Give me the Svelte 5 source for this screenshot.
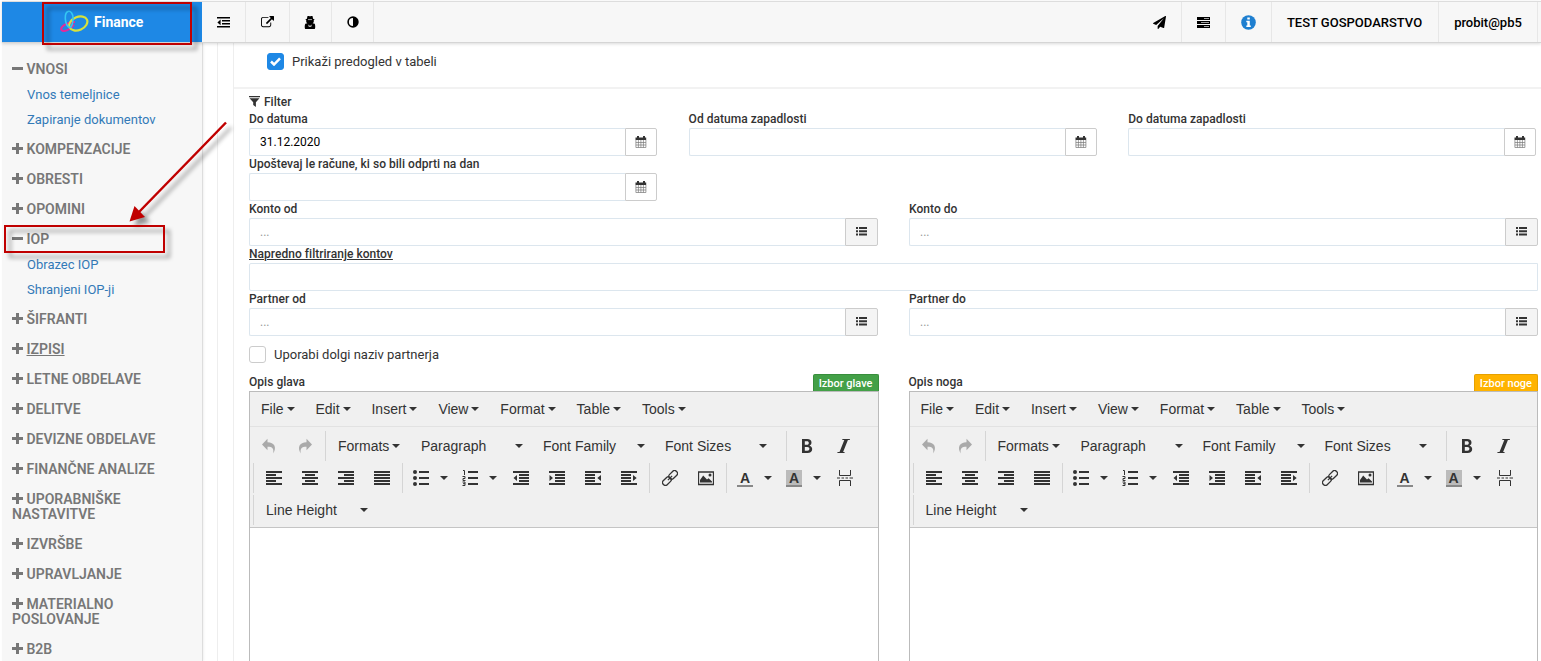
<!--
	Finance module, IOP form
	Sidebar menu, top bar, filter fields and two rich text editors
-->
<script lang="ts">
	interface MenuItem {
		title: string;
		links?: string[];
		hovered?: boolean;
	}

	interface Editor {
		label: string;
		action: string;
		kind: string;
	}

	const menu: MenuItem[] = [
		{ title: 'VNOSI', links: ['Vnos temeljnice', 'Zapiranje dokumentov'] },
		{ title: 'KOMPENZACIJE' },
		{ title: 'OBRESTI' },
		{ title: 'OPOMINI' },
		{ title: 'IOP', links: ['Obrazec IOP', 'Shranjeni IOP-ji'] },
		{ title: 'ŠIFRANTI' },
		{ title: 'IZPISI', hovered: true },
		{ title: 'LETNE OBDELAVE' },
		{ title: 'DELITVE' },
		{ title: 'DEVIZNE OBDELAVE' },
		{ title: 'FINANČNE ANALIZE' },
		{ title: 'UPORABNIŠKE NASTAVITVE' },
		{ title: 'IZVRŠBE' },
		{ title: 'UPRAVLJANJE' },
		{ title: 'MATERIALNO POSLOVANJE' },
		{ title: 'B2B' }
	];

	const editors: Editor[] = [
		{ label: 'Opis glava', action: 'Izbor glave', kind: 'green' },
		{ label: 'Opis noga', action: 'Izbor noge', kind: 'orange' }
	];

	const editorMenu = ['File', 'Edit', 'Insert', 'View', 'Format', 'Table', 'Tools'];

	let dateTo = $state('31.12.2020');
	let preview = $state(true);
	let longName = $state(false);
</script>

{#snippet caret()}
	<svg class="caret" width="8" height="4" viewBox="0 0 8 4"><path d="M0 0h8L4 4z" /></svg>
{/snippet}

{#snippet icon(name: string)}
	<svg class="icon" width="16" height="16" viewBox="0 0 16 16">
		{#if name === 'left'}
			<path d="M0 1h16v2H0zM0 4h10v2H0zM0 7h16v2H0zM0 10h10v2H0zM0 13h16v2H0z" />
		{:else if name === 'center'}
			<path d="M0 1h16v2H0zM3 4h10v2H3zM0 7h16v2H0zM3 10h10v2H3zM0 13h16v2H0z" />
		{:else if name === 'right'}
			<path d="M0 1h16v2H0zM6 4h10v2H6zM0 7h16v2H0zM6 10h10v2H6zM0 13h16v2H0z" />
		{:else if name === 'justify'}
			<path d="M0 1h16v2H0zM0 4h16v2H0zM0 7h16v2H0zM0 10h16v2H0zM0 13h16v2H0z" />
		{:else if name === 'bullets'}
			<circle cx="2" cy="2" r="2" /><circle cx="2" cy="8" r="2" /><circle cx="2" cy="14" r="2" />
			<path d="M6 1h10v2H6zM6 7h10v2H6zM6 13h10v2H6z" />
		{:else if name === 'numbers'}
			<path d="M6 1h10v2H6zM6 7h10v2H6zM6 13h10v2H6z" />
			<path class="thin" d="M1 .5h1.500V5M.5 6.500h2.500v2h-2v2h2.500M.5 12h2.500v3.500H.5M1 13.700h2" />
		{:else if name === 'outdent'}
			<path d="M0 1h16v2H0zM6 4h10v2H6zM6 7h10v2H6zM6 10h10v2H6zM0 13h16v2H0zM4 5v6L.5 8z" />
		{:else if name === 'indent'}
			<path d="M0 1h16v2H0zM6 4h10v2H6zM6 7h10v2H6zM6 10h10v2H6zM0 13h16v2H0zM.5 5v6L4 8z" />
		{:else if name === 'ltr'}
			<path d="M0 1h16v2H0zM0 4h10v2H0zM0 7h10v2H0zM0 10h10v2H0zM0 13h16v2H0zM16 5v6l-3.700-3z" />
		{:else if name === 'rtl'}
			<path d="M0 1h16v2H0zM0 4h10v2H0zM0 7h10v2H0zM0 10h10v2H0zM0 13h16v2H0zM12 5v6l3.700-3z" />
		{:else if name === 'link'}
			<g class="line" transform="rotate(-45 8 8)">
				<rect x="-1.200" y="5.200" width="9.600" height="5.600" rx="2.400" />
				<rect x="7.600" y="5.200" width="9.600" height="5.600" rx="2.400" />
				<path d="M5 8h6" />
			</g>
		{:else if name === 'image'}
			<path class="line" d="M.5 2h15v12.500H.5z" />
			<path d="M2 12.500V10l3.200-4.500L9 9.600l1.600-1.400L14 11.500v1z" /><circle cx="12" cy="5" r="1.500" />
		{:else if name === 'break'}
			<path class="thin" d="M2.500 0v5.500h11V0M2.500 16v-5.500h11V16M0 8h3M4.500 8h2.500M8.500 8h2.500M12.500 8h3.500" />
		{:else if name === 'undo'}
			<path class="muted" d="M6.500.8v3.500c7 0 9.500 5.200 5.700 11.200.8-5-.7-6.700-5.700-6.700v3.500L1 6.500z" />
		{:else if name === 'redo'}
			<path class="muted" d="M9.500.8v3.500c-7 0-9.500 5.200-5.700 11.200-.8-5 .7-6.700 5.700-6.700v3.500L15 6.500z" />
		{:else if name === 'bold'}
			<path
				fill-rule="evenodd"
				d="M3 1h5.200C11 1 12.500 2.400 12.500 4.600c0 1.500-.7 2.600-2 3.100 1.700.4 2.700 1.600 2.700 3.400C13.200 13.600 11.400 15 8.500 15H3zM5.800 3.200v3.500H8c1.200 0 1.800-.7 1.800-1.800S9.200 3.200 8 3.200zM5.800 8.900v3.900h2.500c1.400 0 2.100-.8 2.100-2s-.7-1.900-2.100-1.900z"
			/>
		{:else if name === 'italic'}
			<path d="M7.500 1H15l-.3 1.100h-1.800L8.100 13.900h1.600L9.400 15H2.300l.3-1.100h1.900L9.300 2.100H7.200z" />
		{/if}
	</svg>
{/snippet}

{#snippet button(name: string)}
	<button class="btn" aria-label={name}>{@render icon(name)}</button>
{/snippet}

{#snippet split(name: string)}
	<button class="btn split" aria-label={name}>{@render icon(name)}{@render caret()}</button>
{/snippet}

{#snippet dateField(label: string)}
	<label class="field">
		<span class="label">{label}</span>
		<span class="control">
			<input type="text" />
			{@render calendar()}
		</span>
	</label>
{/snippet}

{#snippet calendar()}
	<span class="addon date">
		<svg width="12" height="12" viewBox="0 0 12 12">
			<path d="M.5 1.500H2V0h2v1.500h4V0h2v1.500h1.200V4H.5z" />
			<path class="grid" d="M.9 4v7.500h10V4M.9 6.500h10M.9 9h10M3.400 4v7.500M5.900 4v7.500M8.400 4v7.500" />
		</svg>
	</span>
{/snippet}

{#snippet lookup(label: string)}
	<label class="field">
		<span class="label">{label}</span>
		<span class="control">
			<input type="text" placeholder="..." />
			<span class="addon list">
				<svg width="11" height="9" viewBox="0 0 11 9">
					<path d="M0 0h2v2H0zM3 0h8v2H3zM0 3.200h2v2H0zM3 3.200h8v2H3zM0 6.400h2v2H0zM3 6.400h8v2H3z" />
				</svg>
			</span>
		</span>
	</label>
{/snippet}

<div class="page">
	<header class="topbar">
		<div class="brand">
			<svg width="29" height="24" viewBox="0 0 29 24" fill="none">
				<path d="M15 12C7 12-.5 17 1.500 20c2 2.300 9.500 0 12.500-5.500" stroke="#e52a9a" stroke-width="2" />
				<ellipse cx="18.300" cy="13.500" rx="9.500" ry="6.500" transform="rotate(-24 18.300 13.500)" stroke="#d8e23c" stroke-width="2.200" />
				<path d="M13 9.500C13.500 4 10.500.5 8 1.500 4 3 4.500 15 9.500 17.500c2 .5 3-3 3.500-8z" stroke="#35c8f5" stroke-width="1.600" />
			</svg>
			<span>Finance</span>
		</div>
		<button class="tool w44" aria-label="Meni">
			<svg width="13" height="11" viewBox="0 0 13 11">
				<path d="M0 0h13v1.600H0zM5 3h8v1.600H5zM5 6h8v1.600H5zM0 9h13v1.600H0zM3.600 2.600v5.600L.4 5.400z" />
			</svg>
		</button>
		<button class="tool w44" aria-label="Odpri">
			<svg width="13" height="13" viewBox="0 0 1792 1792">
				<path d="M1408 928v320q0 119-84.500 203.500t-203.500 84.500h-832q-119 0-203.500-84.500t-84.500-203.500v-832q0-119 84.500-203.500t203.500-84.500h704q14 0 23 9t9 23v64q0 14-9 23t-23 9h-704q-66 0-113 47t-47 113v832q0 66 47 113t113 47h832q66 0 113-47t47-113v-320q0-14 9-23t23-9h64q14 0 23 9t9 23zm384-864v512q0 26-19 45t-45 19-45-19l-176-176-652 652q-10 10-23 10t-23-10l-114-114q-10-10-10-23t10-23l652-652-176-176q-19-19-19-45t19-45 45-19h512q26 0 45 19t19 45z" />
			</svg>
		</button>
		<button class="tool w42" aria-label="Uporabnik">
			<svg class="spy" width="12" height="13" viewBox="0 0 12 13">
				<path d="M3.500 0h1.700l.8.400.8-.4h1.700l.6 2.800 1.600.7-1 .7c.4 1.700-.3 2.600-1.200 3.100l2.200.4c.8 1.800.8 5.300-.3 5.300H1.600c-1.100 0-1.100-3.500-.3-5.300l2.200-.4C2.600 6.800 1.900 5.900 2.300 4.200l-1-.7 1.600-.7z" />
				<path class="cut" d="M4 3.600h4M4.500 8.800l.8 2.200L6 9.500l.7 1.500.8-2.200" />
			</svg>
		</button>
		<button class="tool w42" aria-label="Kontrast">
			<svg width="12" height="12" viewBox="0 0 12 12">
				<circle cx="6" cy="6" r="4.900" fill="none" stroke="#000" stroke-width="1.600" />
				<path d="M6 1a5 5 0 0 0 0 10z" transform="rotate(180 6 6)" />
			</svg>
		</button>
		<div class="spacer"></div>
		<button class="tool w44" aria-label="Pošlji">
			<svg width="13" height="13" viewBox="0 0 1792 1792">
				<path d="M1764 11q33 24 27 64l-256 1536q-5 29-32 45-14 8-31 8-11 0-24-5l-453-185-242 295q-18 23-49 23-13 0-22-4-19-7-30.500-23.500t-11.500-36.500v-349l864-1059-1069 925-395-162q-37-14-40-55-2-40 32-59l1664-960q15-9 32-9 20 0 36 11z" />
			</svg>
		</button>
		<button class="tool w44" aria-label="Strežnik">
			<svg width="13" height="11" viewBox="0 0 13 11">
				<path d="M0 0h13v3H0zM0 4h13v3H0zM0 8h13v3H0z" />
				<path class="cut" d="M7 1.500h5M4 5.500h8M7 9.500h5" />
			</svg>
		</button>
		<button class="tool w46" aria-label="Info">
			<svg width="15" height="15" viewBox="0 0 15 15">
				<circle cx="7.500" cy="7.500" r="7.300" fill="#1e7fd0" />
				<path fill="#fff" d="M6.300 2.500h2.500v2H6.300zM5.300 5.800h3.500v4.700h1V12H5.300v-1.500h1V7.300h-1z" />
			</svg>
		</button>
		<span class="tool company">TEST GOSPODARSTVO</span>
		<span class="tool user">probit@pb5</span>
	</header>

	<div class="body">
		<nav class="sidebar">
			{#each menu as item}
				<div class="heading">
					<svg width="11" height="11" viewBox="0 0 11 11">
						<path d={item.links ? 'M0 4h11v3H0z' : 'M0 4h4V0h3v4h4v3H7v4H4V7H0z'} />
					</svg>
					<span class:hovered={item.hovered}>{item.title}</span>
				</div>
				{#if item.links}
					<ul>
						{#each item.links as link}
							<li>{link}</li>
						{/each}
					</ul>
				{/if}
			{/each}
		</nav>

		<main>
			<div class="panel">
				<section class="preview">
					<label class="check">
						<input type="checkbox" bind:checked={preview} />
						<span class="box">
							{#if preview}
								<svg width="11" height="9" viewBox="0 0 11 9"><path d="M1 4.500l3 3L10 1.300" /></svg>
							{/if}
						</span>
						Prikaži predogled v tabeli
					</label>
				</section>

				<section class="filter">
					<div class="title">
						<svg width="11" height="11" viewBox="0 0 11 11">
							<path d="M0 0h11v1.200H0zM.5 2.200h10L6.900 6.200V11L4.200 9V6.200z" />
						</svg>
						Filter
					</div>
					<div class="thirds">
						<label class="field">
							<span class="label">Do datuma</span>
							<span class="control">
								<input type="text" bind:value={dateTo} />
								{@render calendar()}
							</span>
						</label>
						{@render dateField('Od datuma zapadlosti')}
						{@render dateField('Do datuma zapadlosti')}
						{@render dateField('Upoštevaj le račune, ki so bili odprti na dan')}
					</div>
					<div class="halves">
						{@render lookup('Konto od')}
						{@render lookup('Konto do')}
					</div>
					<label class="field">
						<span class="label"><u>Napredno filtriranje kontov</u></span>
						<span class="control"><input class="full" type="text" /></span>
					</label>
					<div class="halves">
						{@render lookup('Partner od')}
						{@render lookup('Partner do')}
					</div>
					<label class="check long">
						<input type="checkbox" bind:checked={longName} />
						<span class="box"></span>
						Uporabi dolgi naziv partnerja
					</label>

					<div class="halves editors">
						{#each editors as editor}
							<div>
								<div class="editor-head">
									<span class="label">{editor.label}</span>
									<button class="pick {editor.kind}">{editor.action}</button>
								</div>
								<div class="editor">
									<div class="menubar">
										{#each editorMenu as entry}
											<span>{entry}{@render caret()}</span>
										{/each}
									</div>
									<div class="toolbar">
										<div class="row">
											<div class="group history">
												{@render button('undo')}
												{@render button('redo')}
											</div>
											<div class="group selects">
												<span class="formats">Formats{@render caret()}</span>
												<span class="select">Paragraph{@render caret()}</span>
												<span class="select">Font Family{@render caret()}</span>
												<span class="select">Font Sizes{@render caret()}</span>
											</div>
											<div class="group">
												{@render button('bold')}
												{@render button('italic')}
											</div>
										</div>
										<div class="row indented">
											<div class="group">
												{@render button('left')}
												{@render button('center')}
												{@render button('right')}
												{@render button('justify')}
											</div>
											<div class="group">
												{@render split('bullets')}
												{@render split('numbers')}
												{@render button('outdent')}
												{@render button('indent')}
												{@render button('ltr')}
												{@render button('rtl')}
											</div>
											<div class="group">
												{@render button('link')}
												{@render button('image')}
											</div>
											<div class="group">
												<button class="btn split"><b class="color">A</b>{@render caret()}</button>
												<button class="btn split"><b class="color back">A</b>{@render caret()}</button>
												{@render button('break')}
											</div>
										</div>
										<div class="row indented">
											<div class="group selects">
												<span class="select">Line Height{@render caret()}</span>
											</div>
										</div>
									</div>
									<div class="canvas"></div>
								</div>
							</div>
						{/each}
					</div>
				</section>
			</div>
		</main>
	</div>

	<!-- Callouts over the page -->
	<svg class="callouts" width="260" height="270" viewBox="0 0 260 270" aria-hidden="true">
		<rect x="43" y="3" width="148" height="41" />
		<rect x="5" y="226" width="159" height="26" />
		<path class="shaft" d="M226 122.500L139 212" />
		<path class="tip" d="M129.500 221.500L134.500 206 145 217z" />
	</svg>
</div>

<style>
	:global(body) {
		overflow: hidden;
		background: #fff;
	}

	.page {
		position: relative;
		box-sizing: border-box;
		width: 1541px;
		height: 661px;
		padding: 1px 0 0 2px;
		overflow: hidden;
		font-family: Roboto, sans-serif;
		font-size: 13px;
		color: #333;
	}

	button {
		padding: 0;
		border: 0;
		background: none;
		font: inherit;
		color: inherit;
	}

	svg {
		display: block;
		flex: none;
	}

	/* Top bar */
	.topbar {
		position: relative;
		display: flex;
		box-sizing: border-box;
		height: 42px;
		border-top: 1px solid #ddd;
		border-bottom: 1px solid #d5d5d5;
		background: #f7f7f7;
		box-shadow: 0 1px 3px rgba(0, 0, 0, 0.15);
		color: #000;
	}

	.brand {
		display: flex;
		align-items: center;
		box-sizing: border-box;
		width: 200px;
		padding-left: 58px;
		gap: 5px;
		background: #1e88e5;
		font-size: 14px;
		font-weight: 700;
		color: #fff;
	}

	.tool {
		display: flex;
		align-items: center;
		justify-content: center;
		box-sizing: border-box;
		border-right: 1px solid #e7e7e7;
		font-weight: 500;
	}

	.w42 {
		width: 42px;
	}

	.w44 {
		width: 44px;
	}

	.w46 {
		width: 46px;
		padding-right: 1px;
	}

	.spy {
		margin-right: 1px;
	}

	.company {
		width: 167px;
		padding-right: 1px;
	}

	.user {
		width: 99px;
		margin-right: 3px;
	}

	.spacer {
		flex: 1;
	}

	.cut {
		fill: none;
		stroke: #ccc;
		stroke-width: 0.8;
	}

	/* Sidebar */
	.body {
		display: flex;
		height: 618px;
	}

	.sidebar {
		box-sizing: border-box;
		width: 201px;
		padding: 11px 30px 0 10px;
		border-right: 1px solid #ddd;
		background: #f7f7f7;
		box-shadow: 1px 0 2px rgba(0, 0, 0, 0.06);
	}

	.heading {
		padding: 7.5px 0;
		font-size: 14px;
		font-weight: 600;
		line-height: 15px;
		color: #777;
	}

	.heading svg {
		display: inline-block;
		fill: #777;
	}

	.hovered {
		text-decoration: underline;
	}

	ul {
		margin: -2px 0 2px;
		padding: 0 0 0 15px;
		list-style: none;
		white-space: nowrap;
	}

	li {
		line-height: 25px;
		color: #337ab7;
	}

	/* Form */
	main {
		flex: 1;
		margin-left: 14px;
		padding-left: 15px;
		border-left: 1px solid #eee;
	}

	.panel {
		height: 100%;
		border-left: 1px solid #eee;
	}

	.preview {
		box-sizing: border-box;
		height: 46px;
		padding: 10px 0 0 33px;
		border-bottom: 2px solid #f2f2f2;
	}

	.filter {
		width: 1289px;
		padding: 4px 0 0 15px;
	}

	.check {
		display: flex;
		align-items: center;
		gap: 8px;
		height: 17px;
	}

	.check input {
		display: none;
	}

	.box {
		display: flex;
		align-items: center;
		justify-content: center;
		box-sizing: border-box;
		width: 17px;
		height: 17px;
		border: 1px solid #ccc;
		border-radius: 3px;
	}

	.preview .box {
		border-color: #1e88e5;
		background: #1e88e5;
	}

	.box path {
		fill: none;
		stroke: #fff;
		stroke-width: 2.5;
	}

	.long {
		margin: 10px 0 11px;
	}

	.title {
		display: flex;
		align-items: center;
		height: 18px;
		gap: 4px;
		font-size: 12px;
		font-weight: 500;
	}

	.title svg {
		margin-bottom: 1px;
		fill: #333;
	}

	.thirds {
		display: grid;
		grid-template-columns: repeat(3, 1fr);
		column-gap: 31.4px;
		width: 1287.4px;
	}

	.halves {
		display: grid;
		grid-template-columns: 1fr 1fr;
		column-gap: 31px;
	}

	.editors {
		column-gap: 30px;
	}

	.field {
		display: block;
		height: 45px;
	}

	.label {
		display: block;
		height: 17px;
		font-size: 12px;
		font-weight: 500;
		letter-spacing: 0.03px;
		line-height: 16px;
	}

	u {
		text-underline-offset: 1px;
	}

	.control {
		display: flex;
		height: 28px;
	}

	.control input {
		flex: 1;
		box-sizing: border-box;
		min-width: 0;
		padding: 0 10px;
		border: 1px solid #dce6ee;
		border-right: 0;
		border-radius: 2px 0 0 2px;
		outline: 0;
		background: #fff;
		font: 12px Roboto, sans-serif;
		color: #000;
	}

	.control .full {
		border-right: 1px solid #dce6ee;
	}

	input::placeholder {
		color: #999;
	}

	.addon {
		display: flex;
		align-items: center;
		justify-content: center;
		box-sizing: border-box;
		width: 32px;
		border: 1px solid #ccc;
		border-radius: 0 2px 2px 0;
		fill: #333;
	}

	.date {
		padding-bottom: 1px;
	}

	.list {
		width: 33px;
		padding-bottom: 2px;
		background: #f4f4f4;
	}

	.grid {
		fill: none;
		stroke: #777;
		stroke-width: 0.7;
	}

	/* Editors */
	.editor-head {
		display: flex;
		justify-content: space-between;
		height: 17px;
	}

	.pick {
		padding: 1px 5px 0;
		border: 1px solid #388e3c;
		border-bottom: 0;
		border-radius: 2px 2px 0 0;
		background: #43a047;
		font-size: 11px;
		font-weight: 500;
		line-height: 15px;
		color: #fff;
	}

	.orange {
		border-color: #e6a100;
		background: #ffb300;
	}

	.editor {
		border: 1px solid #bbb;
		font-family: 'Liberation Sans', Arial, sans-serif;
		font-size: 14px;
	}

	.caret {
		fill: #333;
	}

	.menubar {
		display: flex;
		align-items: center;
		height: 34px;
		padding-left: 11px;
		border-bottom: 1px solid #e2e2e2;
		background: #f0f0f0;
	}

	.menubar span {
		display: flex;
		align-items: center;
		margin-right: 20.9px;
		gap: 3px;
	}

	.toolbar {
		display: flex;
		flex-direction: column;
		height: 94px;
		padding: 4px 0 2px 1px;
		gap: 2px;
		border-bottom: 1px solid #c5c5c5;
		background: #f0f0f0;
	}

	.row {
		display: flex;
		height: 30px;
	}

	.indented {
		padding-left: 2px;
	}

	.group {
		display: flex;
		align-items: center;
		padding-right: 2px;
		border-left: 1px solid #d5d5d5;
	}

	.history {
		border-left: 0;
	}

	.btn {
		display: flex;
		align-items: center;
		justify-content: center;
		width: 36px;
		height: 30px;
	}

	.split {
		justify-content: flex-start;
		width: 49px;
		padding-left: 10px;
		gap: 11px;
	}

	.split + .btn:not(.split),
	.group:not(.history) > .btn:not(.split):first-child {
		margin-left: 2px;
	}

	.selects > span {
		display: flex;
		align-items: center;
	}

	.formats {
		width: 71px;
		margin-left: 12px;
		padding-right: 12px;
		gap: 3px;
	}

	.select {
		justify-content: space-between;
		width: 102px;
		padding-right: 20px;
	}

	.indented .select {
		padding-left: 12px;
	}

	.selects .select:last-child {
		padding-right: 17px;
	}

	.icon {
		fill: #333;
	}

	.line {
		fill: none;
		stroke: #333;
		stroke-width: 1.3;
	}

	.thin {
		fill: none;
		stroke: #333;
		stroke-width: 1;
	}

	.muted {
		fill: #aaa;
	}

	.color {
		width: 16px;
		height: 15px;
		border-bottom: 2px solid #888;
		line-height: 16px;
		text-align: center;
	}

	.back {
		background: #bbb;
	}

	.canvas {
		height: 160px;
	}

	.callouts {
		position: absolute;
		top: 0;
		left: 0;
		fill: none;
		stroke: #c00000;
		stroke-width: 2;
		filter: drop-shadow(5px 5px 2px rgba(0, 0, 0, 0.4));
		pointer-events: none;
	}

	.shaft {
		stroke-width: 2.5;
	}

	.tip {
		fill: #c00000;
		stroke: none;
	}
</style>
